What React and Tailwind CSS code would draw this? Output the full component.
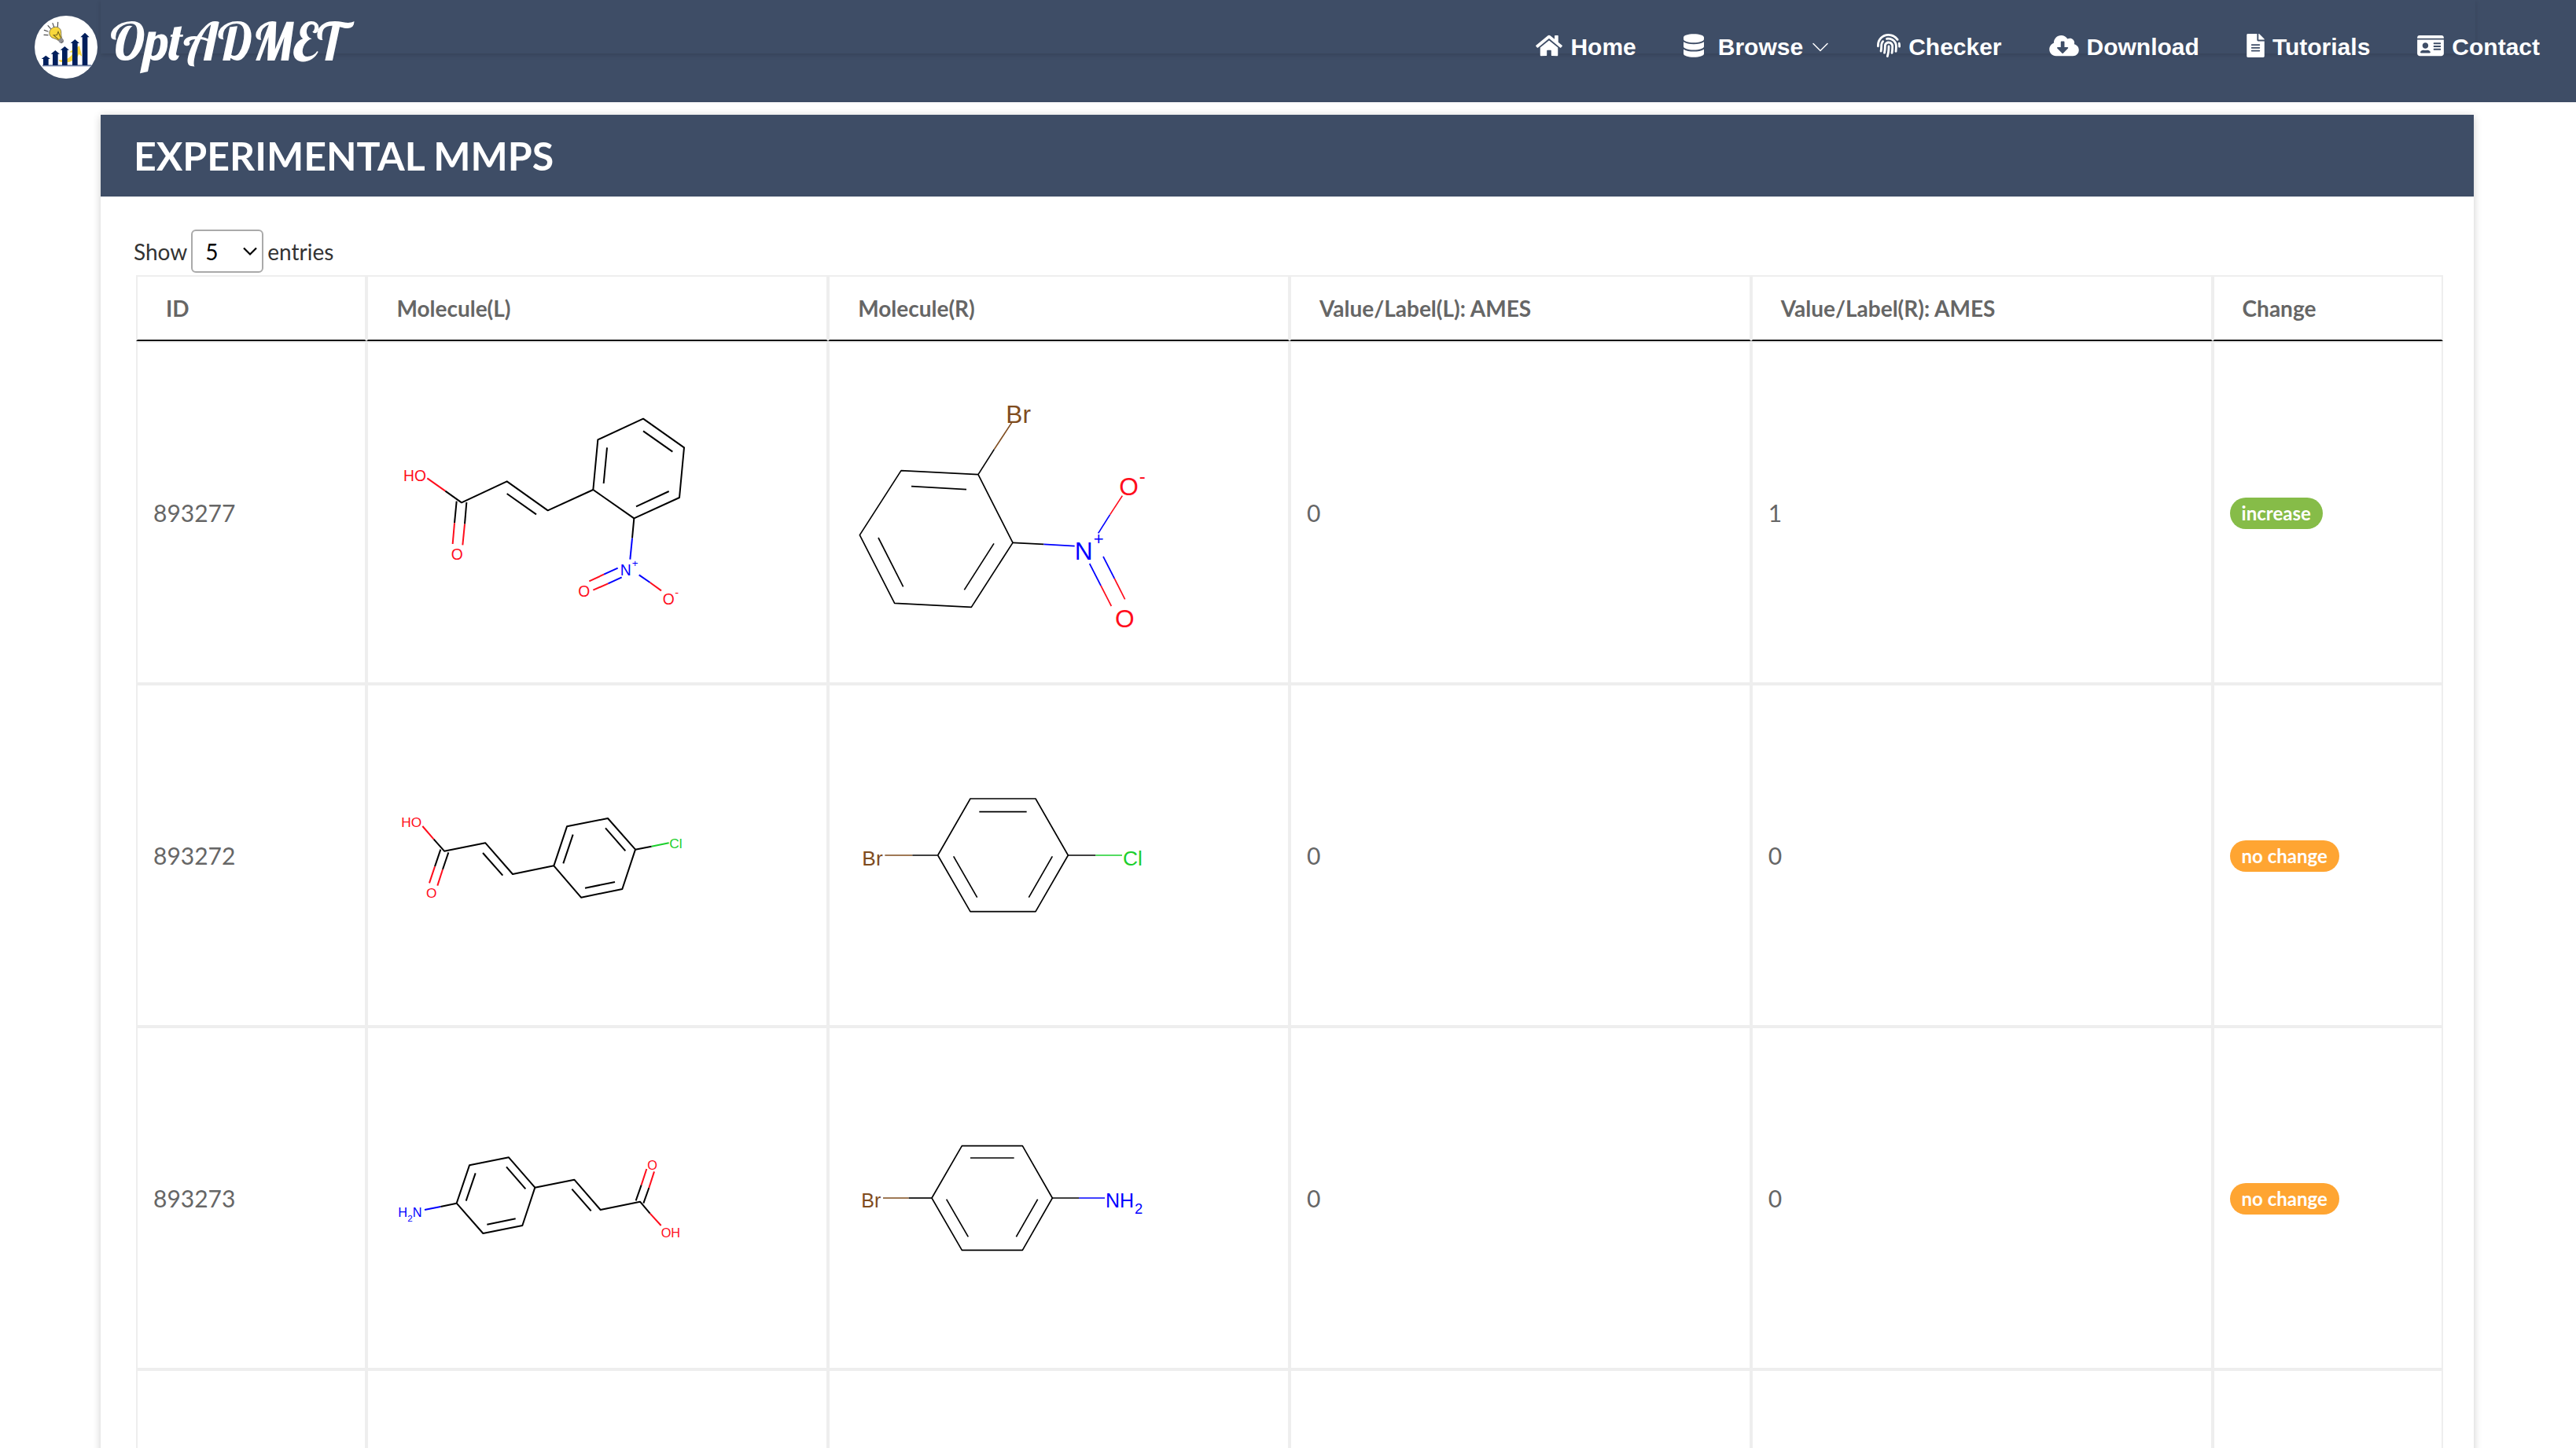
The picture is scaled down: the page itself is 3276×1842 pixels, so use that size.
import React from "react";
import {
  FaHome,
  FaDatabase,
  FaFingerprint,
  FaCloudDownloadAlt,
  FaFileAlt,
  FaIdCard,
} from "react-icons/fa";
import { BsChevronDown } from "react-icons/bs";

const BLACK = "#000000";
const RED = "#ff0d1c";
const BLUE = "#0000ff";
const GREEN = "#1bcf2c";
const BROWN = "#7f4c1e";

/* Bonds are [color, x1, y1, x2, y2, ...]; atoms are [color, x, baseline, size, text]. */
function Molecule({ label, viewBox, stroke = 5, bonds, atoms }) {
  return (
    <svg className="block size-[400px] max-w-full" viewBox={viewBox} role="img" aria-label={label}>
      <g fill="none" strokeWidth={stroke} strokeLinejoin="round">
        {bonds.map(([color, ...pts], i) => (
          <polyline key={i} stroke={color} points={pts.join(" ")} />
        ))}
      </g>
      <g fontFamily="'Liberation Sans', sans-serif">
        {atoms.map(([color, x, y, size, text], i) => (
          <text key={i} x={x} y={y} fontSize={size} fill={color}>
            {text}
          </text>
        ))}
      </g>
    </svg>
  );
}

const nitroCinnamicAcid = {
  label: "2-nitrocinnamic acid",
  viewBox: "84 -84 1200 1200",
  stroke: 6,
  bonds: [
    [RED, 250, 385, 319, 434],
    [BLACK, 319, 434, 381, 478, 554, 397, 710, 508, 883, 429],
    [BLACK, 554, 444, 666, 523],
    [BLACK, 883, 429, 901, 238, 1074, 158, 1230, 268, 1212, 459, 1039, 538, 883, 429],
    [BLACK, 923, 405, 936, 268],
    [BLACK, 1074, 205, 1186, 284],
    [BLACK, 1172, 435, 1047, 493],
    [BLACK, 362, 473, 354, 556],
    [RED, 354, 556, 347, 636],
    [BLACK, 400, 477, 393, 560],
    [RED, 393, 560, 385, 640],
    [BLACK, 1039, 538, 1032, 614],
    [BLUE, 1032, 614, 1024, 695],
    [BLUE, 977, 728, 924, 752],
    [RED, 924, 752, 868, 778],
    [BLUE, 992, 763, 940, 787],
    [RED, 940, 787, 883, 812],
    [BLUE, 1058, 754, 1100, 783],
    [RED, 1100, 783, 1143, 814],
  ],
  atoms: [
    [RED, 159, 396, 58, "HO"],
    [RED, 341, 695, 58, "O"],
    [BLUE, 986, 756, 58, "N"],
    [BLUE, 1031, 722, 40, "+"],
    [RED, 826, 836, 58, "O"],
    [RED, 1148, 866, 58, "O"],
    [RED, 1195, 838, 44, "-"],
  ],
};

const bromoNitrobenzene = {
  label: "1-bromo-2-nitrobenzene",
  viewBox: "75 -84 1200 1200",
  bonds: [
    [BROWN, 710, 173, 643, 275],
    [BLACK, 643, 275, 582, 371],
    [BLACK, 582, 371, 288, 356, 130, 602, 263, 862, 556, 877, 714, 631, 582, 371],
    [BLACK, 327, 416, 537, 428],
    [BLACK, 201, 612, 296, 799],
    [BLACK, 642, 634, 529, 811],
    [BLACK, 714, 631, 832, 637],
    [BLUE, 832, 637, 950, 644],
    [BLUE, 1040, 595, 1085, 524],
    [RED, 1085, 524, 1132, 452],
    [BLUE, 1007, 711, 1050, 795],
    [RED, 1050, 795, 1090, 873],
    [BLUE, 1059, 684, 1102, 768],
    [RED, 1102, 768, 1142, 847],
  ],
  atoms: [
    [BROWN, 688, 173, 95, "Br"],
    [BLUE, 950, 696, 95, "N"],
    [BLUE, 1022, 640, 66, "+"],
    [RED, 1120, 449, 95, "O"],
    [RED, 1196, 403, 72, "-"],
    [RED, 1104, 953, 95, "O"],
  ],
};

const chloroCinnamicAcid = {
  label: "4-chlorocinnamic acid",
  viewBox: "84 -306 1200 1200",
  stroke: 6,
  bonds: [
    [RED, 232, 183, 275, 233],
    [BLACK, 275, 233, 315, 278, 472, 247, 576, 366, 733, 334],
    [BLACK, 462, 285, 538, 371],
    [BLACK, 733, 334, 783, 184, 939, 153, 1044, 272, 994, 423, 837, 455, 733, 334],
    [BLACK, 769, 325, 806, 215],
    [BLACK, 930, 190, 1006, 277],
    [BLACK, 966, 396, 852, 419],
    [BLACK, 301, 272, 279, 337],
    [RED, 279, 337, 258, 400],
    [BLACK, 331, 283, 309, 348],
    [RED, 309, 348, 289, 410],
    [BLACK, 1044, 272, 1106, 260],
    [GREEN, 1106, 260, 1172, 247],
  ],
  atoms: [
    [RED, 151, 186, 52, "HO"],
    [RED, 246, 456, 52, "O"],
    [GREEN, 1174, 267, 52, "Cl"],
  ],
};

const bromoChlorobenzene = {
  label: "1-bromo-4-chlorobenzene",
  viewBox: "75 -276 1200 1200",
  bonds: [
    [BROWN, 226, 324, 331, 324],
    [BLACK, 331, 324, 428, 324],
    [BLACK, 428, 324, 552, 108, 801, 108, 925, 324, 801, 539, 552, 539, 428, 324],
    [BLACK, 586, 158, 767, 158],
    [BLACK, 488, 328, 578, 485],
    [BLACK, 865, 328, 775, 485],
    [BLACK, 925, 324, 1030, 324],
    [GREEN, 1030, 324, 1131, 324],
  ],
  atoms: [
    [BROWN, 139, 362, 79, "Br"],
    [GREEN, 1134, 362, 79, "Cl"],
  ],
};

const aminoCinnamicAcid = {
  label: "4-aminocinnamic acid",
  viewBox: "84 -318 1200 1200",
  stroke: 6,
  bonds: [
    [BLUE, 240, 327, 301, 315],
    [BLACK, 301, 315, 362, 302],
    [BLACK, 362, 302, 411, 157, 561, 127, 661, 242, 613, 387, 463, 417, 362, 302],
    [BLACK, 398, 293, 434, 187],
    [BLACK, 552, 163, 625, 247],
    [BLACK, 587, 361, 478, 383],
    [BLACK, 661, 242, 811, 212, 911, 327, 1062, 296, 1100, 341],
    [RED, 1100, 341, 1142, 387],
    [BLACK, 802, 248, 875, 331],
    [BLACK, 1046, 292, 1067, 232],
    [RED, 1067, 232, 1087, 171],
    [BLACK, 1075, 302, 1096, 243],
    [RED, 1096, 243, 1116, 181],
  ],
  atoms: [
    [BLUE, 139, 354, 49, "H"],
    [BLUE, 175, 373, 35, "2"],
    [BLUE, 194, 354, 49, "N"],
    [RED, 1090, 175, 49, "O"],
    [RED, 1142, 432, 49, "OH"],
  ],
};

const bromoAniline = {
  label: "4-bromoaniline",
  viewBox: "75 -288 1200 1200",
  bonds: [
    [BROWN, 219, 312, 317, 312],
    [BLACK, 317, 312, 405, 312],
    [BLACK, 405, 312, 520, 113, 751, 113, 865, 312, 751, 511, 520, 511, 405, 312],
    [BLACK, 552, 159, 719, 159],
    [BLACK, 461, 317, 544, 460],
    [BLACK, 809, 317, 727, 460],
    [BLACK, 865, 312, 966, 312],
    [BLUE, 966, 312, 1065, 312],
  ],
  atoms: [
    [BROWN, 136, 347, 75, "Br"],
    [BLUE, 1068, 347, 75, "NH"],
    [BLUE, 1179, 372, 55, "2"],
  ],
};

const columns = [
  ["ID", "w-[10%]"],
  ["Molecule(L)", "w-[20%]"],
  ["Molecule(R)", "w-[20%]"],
  ["Value/Label(L): AMES", "w-[20%]"],
  ["Value/Label(R): AMES", "w-[20%]"],
  ["Change", "w-[10%]"],
];

const rows = [
  { id: "893277", left: nitroCinnamicAcid, right: bromoNitrobenzene, l: "0", r: "1", change: "increase" },
  { id: "893272", left: chloroCinnamicAcid, right: bromoChlorobenzene, l: "0", r: "0", change: "no change" },
  { id: "893273", left: aminoCinnamicAcid, right: bromoAniline, l: "0", r: "0", change: "no change" },
];

function Logo() {
  const bars = [
    [43, 165, 152],
    [79, 146, 132],
    [115, 131, 117],
    [154, 105, 90],
    [192, 82, 65],
  ];
  return (
    <svg className="size-20 shrink-0" viewBox="0 0 240 240" aria-hidden="true">
      <circle cx="120" cy="120" r="120" fill="#ffffff" />
      <path
        d="M92 168 C118 172 142 158 146 141 L132 139 L171 115 L181 155 L169 147 C158 171 126 186 95 175 Z"
        fill="#ffd83d"
      />
      <g fill="#001f5c">
        {bars.map(([x, neck, top]) => (
          <path
            key={x}
            d={`M${x} ${top} L${x + 17} ${neck} H${x + 10} V189 H${x - 10} V${neck} H${x - 17} Z`}
          />
        ))}
        <rect x="30" y="188" width="186" height="3" />
      </g>
      <rect x="30" y="191" width="186" height="3" fill="#a9b4cc" />
      <g transform="rotate(-36 80 66)">
        <path
          d="M80 43 C65 43 57 54 57 65 C57 76 69 82 71 94 H89 C91 82 103 76 103 65 C103 54 95 43 80 43 Z"
          fill="#f8d73c"
          stroke="#55523f"
          strokeWidth="2"
        />
        <path d="M75 93 L69 68 L80 75 L91 68 L85 93" fill="none" stroke="#6a5c1c" strokeWidth="3" />
        <path d="M71 95 H89 V106 L84 112 H76 L71 106 Z" fill="#77777b" />
        <path d="M71 99 H89 M71 104 H89" stroke="#b9b9bd" strokeWidth="2" />
      </g>
      <path
        d="M36 73 L51 74 M37 55 L51 60 M51 38 L61 49 M69 29 L74 43 M88 42 L89 25"
        stroke="#4c4c4c"
        strokeWidth="3.5"
        strokeLinecap="round"
      />
    </svg>
  );
}

export default function App() {
  return (
    <div className="h-screen overflow-hidden bg-white font-['Lato',sans-serif] text-[28px] leading-9 text-[#333333]">
      <header className="relative bg-[#3e4d66] text-white">
        <div className="absolute inset-x-32 top-0 h-[68px] shadow-[0_2px_6px_rgba(0,0,0,0.14)]" />
        <div className="relative flex items-center justify-between pt-5 pr-[46px] pb-[30px] pl-11">
          <a href="#" className="flex items-center gap-4">
            <Logo />
            <span className="pb-3.5 font-['Lobster','Liberation_Serif',serif] text-[66px] leading-[66px]">
              OptADMET
            </span>
          </a>
          <nav className="flex items-center gap-[60px] font-['Liberation_Sans',sans-serif] text-[30px] font-bold whitespace-nowrap">
            <a href="#" className="flex items-center gap-2.5">
              <FaHome className="mb-1 h-[30px] w-[34px]" aria-hidden="true" />
              Home
            </a>
            <a href="#" className="flex items-center gap-2.5">
              <FaDatabase className="mr-2 mb-1 h-[30px] w-[26px]" aria-hidden="true" />
              Browse
              <BsChevronDown className="size-6" aria-hidden="true" />
            </a>
            <a href="#" className="flex items-center gap-2.5">
              <FaFingerprint className="mb-1 h-[30px] w-[30px]" aria-hidden="true" />
              Checker
            </a>
            <a href="#" className="flex items-center gap-2.5">
              <FaCloudDownloadAlt className="mb-1 h-[30px] w-[38px]" aria-hidden="true" />
              Download
            </a>
            <a href="#" className="flex items-center gap-2.5">
              <FaFileAlt className="mb-1 h-[30px] w-[23px]" aria-hidden="true" />
              Tutorials
            </a>
            <a href="#" className="flex items-center gap-2.5">
              <FaIdCard className="mb-1 h-[30px] w-[34px]" aria-hidden="true" />
              Contact
            </a>
          </nav>
        </div>
      </header>

      <main className="mt-4 mr-[130px] ml-32 bg-white shadow-[0_2px_10px_rgba(0,0,0,0.2)]">
        <h1 className="bg-[#3e4d66] px-[42px] py-[22px] text-[50px] leading-[60px] font-bold text-white">
          EXPERIMENTAL MMPS
        </h1>
        <div className="pt-[42px] pr-[39px] pb-10 pl-[42px]">
          <label className="flex items-center gap-[5px]">
            <span>Show</span>
            <span className="relative">
              <select
                defaultValue="5"
                className="block h-[55px] w-[92px] appearance-none rounded-md border-2 border-[#aaaaaa] bg-transparent px-4 text-black"
              >
                <option>5</option>
                <option>10</option>
                <option>25</option>
                <option>50</option>
              </select>
              <svg
                className="pointer-events-none absolute top-[22px] right-2 h-3 w-[18px]"
                viewBox="0 0 18 12"
                fill="none"
                stroke="#000000"
                strokeWidth="2.2"
                aria-hidden="true"
              >
                <path d="M1 1.5 L9 9.5 L17 1.5" />
              </svg>
            </span>
            <span>entries</span>
          </label>

          <div className="mt-[3px] pl-[3px]">
            <table className="w-full table-fixed border-separate border-spacing-0 text-left text-[#666666]">
              <thead>
                <tr>
                  {columns.map(([name, width]) => (
                    <th
                      key={name}
                      scope="col"
                      className={`${width} h-[84px] border-2 border-[#eeeeee] border-b-[#111111] px-9 font-bold`}
                    >
                      {name}
                    </th>
                  ))}
                </tr>
              </thead>
              <tbody className="text-[30px]">
                {rows.map((row) => (
                  <tr key={row.id}>
                    <td className="border-2 border-[#eeeeee] px-5 py-4">{row.id}</td>
                    <td className="border-2 border-[#eeeeee] px-5 py-4">
                      <Molecule {...row.left} />
                    </td>
                    <td className="border-2 border-[#eeeeee] px-5 py-4">
                      <Molecule {...row.right} />
                    </td>
                    <td className="border-2 border-[#eeeeee] px-5 py-4">{row.l}</td>
                    <td className="border-2 border-[#eeeeee] px-5 py-4">{row.r}</td>
                    <td className="border-2 border-[#eeeeee] px-5 py-4">
                      <span
                        className={
                          row.change === "increase"
                            ? "inline-block rounded-[20px] bg-[#86bc48] px-[15px] align-middle text-2xl leading-10 font-bold text-white"
                            : "inline-block rounded-[20px] bg-[#ffa532] px-[15px] align-middle text-2xl leading-10 font-bold text-white"
                        }
                      >
                        {row.change}
                      </span>
                    </td>
                  </tr>
                ))}
                <tr>
                  {columns.map(([name]) => (
                    <td key={name} className="h-[436px] border-2 border-[#eeeeee]" />
                  ))}
                </tr>
              </tbody>
            </table>
          </div>
        </div>
      </main>
    </div>
  );
}
